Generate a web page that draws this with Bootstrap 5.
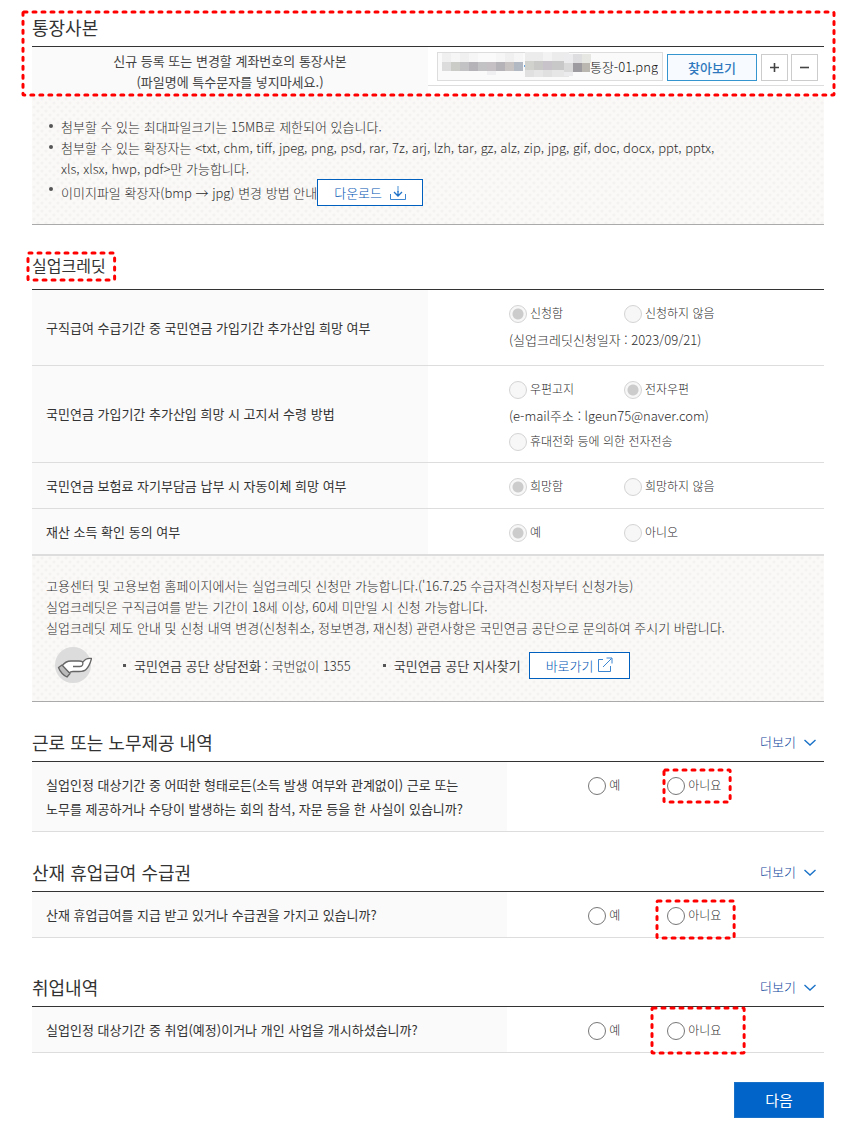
<!DOCTYPE html>
<html lang="ko">
<head>
<meta charset="utf-8">
<meta name="viewport" content="width=device-width, initial-scale=1">
<title>실업인정 신청</title>
<link href="https://cdn.jsdelivr.net/npm/bootstrap@5.3.0/dist/css/bootstrap.min.css" rel="stylesheet">
<script src="https://cdn.jsdelivr.net/npm/bootstrap@5.3.0/dist/js/bootstrap.bundle.min.js"></script>
<style>
body{font-family:"Noto Sans CJK KR",sans-serif;font-size:13px;line-height:21px;color:#2c2c2c;font-weight:300;background:#fff}
.page-wrap{padding:12px 26px 20px 32px}
.sec-head{margin:25px 0 4px}
.head-credit{margin-bottom:9px}
.head-job{margin-top:34px}
.sec-title{font-size:18px;line-height:30px;font-weight:400;color:#333;margin:0}
.title-sm{font-size:16px}

.form-grid{width:100%;table-layout:fixed;border-top:1px solid #333;border-collapse:separate;border-spacing:0}
.form-grid th{width:50%;background:#fafafa;color:#333;font-weight:400;padding:0 14px;line-height:24px}
.form-grid td{padding:11px 0 7px 81px;line-height:26px;vertical-align:top}
.form-grid th,.form-grid td{height:46px;border-bottom:1px solid #ddd}
.form-grid .tall th{height:76px}
.wide-label th{width:60%}
.form-grid .two-line th{height:70px}
.credit-grid{border-bottom:1px solid #ddd}
.form-grid.file-grid th{height:50px;line-height:21px;padding:3px 14px 5px;color:#444;text-align:center;border:0}
.form-grid.file-grid td{height:50px;padding:0;border:0}
.file-line{height:39px;padding:5px 6px 4px 9px;border-bottom:1px solid #ddd}

.info-box{background-color:#faf9f7;background-image:radial-gradient(circle at 2px 2px,#f4f2f1 1px,transparent 2px),radial-gradient(circle at 2px 2px,#f4f2f1 1px,transparent 2px);background-size:8px 8px;background-position:0 0,4px 4px;border-bottom:1px solid #aaa;padding:19px 14px 18px}
.info-list li{position:relative;padding:0 82px 0 15px}
.info-list li::before{content:"";position:absolute;left:3px;top:8px;width:4px;height:4px;border-radius:50%;background:#555}
.dot-item::before{content:"";width:3px;height:3px;background:#555;margin-right:8px;flex:none}
.contact-row{margin-top:9px;padding-left:9px}
.dot-item strong{font-weight:400;color:#444}
.phone-item{margin:0 32px 0 31px}

.btn-line{--bs-btn-color:#0055b4;--bs-btn-border-color:#0060bf;--bs-btn-bg:#fff;--bs-btn-border-radius:0;--bs-btn-font-size:13px;--bs-btn-font-weight:300;--bs-btn-line-height:25px;--bs-btn-padding-y:0;--bs-btn-padding-x:16px;--bs-btn-hover-bg:#eef5fc;--bs-btn-hover-color:#0060bf}
.btn-find{--bs-btn-color:#2f78bd;--bs-btn-border-color:#3596cf;--bs-btn-bg:#f7fbff;--bs-btn-border-radius:0;--bs-btn-font-size:13px;--bs-btn-font-weight:500;--bs-btn-line-height:25px;--bs-btn-padding-y:0;--bs-btn-padding-x:0;width:90px}
.btn-step{--bs-btn-border-color:#ccc;--bs-btn-bg:#fff;--bs-btn-border-radius:0;--bs-btn-padding-y:0;--bs-btn-padding-x:0;width:27px;height:27px}
.step-pair{gap:3px}
.btn-next{--bs-btn-color:#fff;--bs-btn-bg:#0064c8;--bs-btn-border-color:#1a72c8;--bs-btn-border-radius:0;--bs-btn-font-size:15px;--bs-btn-font-weight:400;--bs-btn-line-height:34px;--bs-btn-padding-y:0;--bs-btn-padding-x:0;width:90px;margin-top:29px}
.btn-more{--bs-btn-color:#0e469c;--bs-btn-border-width:0;--bs-btn-font-size:13px;--bs-btn-font-weight:300;--bs-btn-line-height:26px;--bs-btn-padding-y:0;--bs-btn-padding-x:8px}

.file-field{min-width:0}
.file-name{height:29px;border:1px solid #ddd;border-radius:0;background:#fafafa;color:#111;font-size:13px;font-weight:300;padding:0 4px;text-align:right}
.mosaic{position:absolute;left:5px;top:0}

.opt{display:inline-flex;align-items:center;gap:3px;position:relative;height:26px;font-size:12px;vertical-align:top}
.opt input{appearance:none;width:18px;height:18px;border:1px solid #777;border-radius:50%;margin:0;background:#fff;flex:none}
.opt label{line-height:24px;padding-bottom:2px}
.opt input:checked{background:radial-gradient(circle,#0064c8 5px,#fff 6px)}
.opt input:disabled{border-color:#d4d4d4;background:#f7f7f7}
.opt input:disabled:checked{background:radial-gradient(circle,#ccc 5px,#f7f7f7 6px)}
.opt-first{min-width:115px}
.wide-label .opt-first{min-width:79px}

.callout-frame{position:absolute;pointer-events:none}
.callout-frame svg{display:block;width:100%;height:100%;overflow:visible}
.callout-frame rect{width:100%;height:100%;fill:none;stroke:#f00;stroke-width:3;stroke-linecap:round;stroke-dasharray:3 6}
.around-file{inset:0 -10px 2px -9px}
.around-title{inset:3px -9px 0 -4px}
.around-work{inset:-3px -9px -3px -3px}
.around-injury{inset:-2px -13px -9px -10px}
.around-job{inset:-10px -23px -9px -15px}
</style>
</head>
<body>
<main class="page-wrap">

<section class="position-relative">
  <h2 class="sec-title mb-1">통장사본</h2>
  <table class="form-grid file-grid">
    <tr>
      <th scope="row"><label for="bankFile">신규 등록 또는 변경할 계좌번호의 통장사본<br>(파일명에 특수문자를 넣지마세요.)</label></th>
      <td>
        <div class="file-line d-flex align-items-end">
          <div class="file-field position-relative flex-grow-1 me-1">
            <input id="bankFile" class="file-name form-control" type="text" value="통장-01.png" readonly>
            <svg class="mosaic" width="151" height="27" viewBox="0 0 151 27" shape-rendering="crispEdges" aria-hidden="true">
              <path fill="#f0f0f0" d="M0 1h9v9H0zM18 1h9v9h-9zM63 1h9v9h-9z"/><path fill="#f6f6f6" d="M9 1h9v9H9zM27 1h9v9h-9zM54 1h9v9h-9zM72 1h9v9h-9z"/>
              <path fill="#dcdcdc" d="M0 10h9v9H0z"/><path fill="#cbcbc7" d="M9 10h9v9H9z"/><path fill="#c2c1c4" d="M18 10h9v9h-9zM36 10h9v9h-9z"/><path fill="#b5b3b7" d="M27 10h9v9h-9zM54 10h9v9h-9z"/><path fill="#c4c0c4" d="M45 10h9v9h-9z"/><path fill="#c6c3c2" d="M63 10h9v9h-9z"/><path fill="#b3b9c2" d="M72 10h9v9h-9z"/>
              <path fill="#f0eff1" d="M45 19h9v4h-9z"/><path fill="#68a6dd" d="M82 13h1v2h-1z"/>
              <path fill="#ececec" d="M83 0h44v9H83z"/><path fill="#f3f3f3" d="M101 0h9v9h-9z"/>
              <path fill="#d1d1cd" d="M83 9h9v9h-9z"/><path fill="#c9c9c7" d="M92 9h9v9h-9z"/><path fill="#c8c3ca" d="M101 9h9v9h-9z"/><path fill="#c8c8c8" d="M110 9h12v9h-12z"/>
              <path fill="#e0e0e0" d="M83 18h9v7h-9zM101 18h9v7h-9z"/><path fill="#e6e6e6" d="M92 18h9v7h-9zM110 18h17v7h-17z"/>
              <path fill="#ececee" d="M122 2h9v9h-9z"/><path fill="#dedee1" d="M131 2h9v9h-9z"/><path fill="#e6e6e2" d="M140 2h9v9h-9z"/>
              <path fill="#d9d9d9" d="M122 11h9v9h-9z"/><path fill="#9d9ba0" d="M131 11h9v9h-9z"/><path fill="#bab7b0" d="M140 11h8v9h-8z"/><path fill="#ebebed" d="M122 20h9v4h-9z"/>
            </svg>
          </div>
          <button type="button" class="btn btn-find me-1">찾아보기</button>
          <div class="step-pair d-flex">
            <button type="button" class="btn btn-step d-flex align-items-center justify-content-center" aria-label="추가"><svg width="9" height="9" viewBox="0 0 9 9"><path d="M4.5 0v9M0 4.500h9" stroke="#444" stroke-width="1.600"/></svg></button>
            <button type="button" class="btn btn-step d-flex align-items-center justify-content-center" aria-label="삭제"><svg width="9" height="9" viewBox="0 0 9 9"><path d="M0 4.500h9" stroke="#444" stroke-width="1.600"/></svg></button>
          </div>
        </div>
      </td>
    </tr>
  </table>
  <div class="callout-frame around-file"><svg aria-hidden="true"><rect rx="1"/></svg></div>
</section>

<div class="info-box">
  <ul class="info-list list-unstyled mb-0">
    <li>첨부할 수 있는 최대파일크기는 15MB로 제한되어 있습니다.</li>
    <li>첨부할 수 있는 확장자는 &lt;txt, chm, tiff, jpeg, png, psd, rar, 7z, arj, lzh, tar, gz, alz, zip, jpg, gif, doc, docx, ppt, pptx, xls, xlsx, hwp, pdf&gt;만 가능합니다.</li>
    <li class="d-flex align-items-center">이미지파일 확장자(bmp → jpg) 변경 방법 안내
      <button type="button" class="btn btn-line d-flex align-items-center gap-2">다운로드 <svg width="16" height="14" viewBox="0 0 16 14" fill="none"><path d="M.5 8v5.500h15V8" stroke="#3c85d0"/><path d="M8 0v6" stroke="#8fbbe6" stroke-width="1.600"/><path d="M8 5v5M4 6l4 4 4-4" stroke="#1f72c8" stroke-width="1.300"/></svg></button>
    </li>
  </ul>
</div>

<section>
  <div class="sec-head head-credit">
    <h2 class="sec-title title-sm d-inline-block position-relative align-top">실업크레딧<span class="callout-frame around-title"><svg aria-hidden="true"><rect rx="1"/></svg></span></h2>
  </div>
  <table class="form-grid credit-grid">
    <tr class="tall">
      <th scope="row">구직급여 수급기간 중 국민연금 가입기간 추가산입 희망 여부</th>
      <td>
        <div class="d-flex"><div class="opt opt-first"><input type="radio" name="credit" id="credit1" checked disabled><label for="credit1">신청함</label></div><div class="opt"><input type="radio" name="credit" id="credit2" disabled><label for="credit2">신청하지 않음</label></div></div>
        <div>(실업크레딧신청일자 : 2023/09/21)</div>
      </td>
    </tr>
    <tr>
      <th scope="row">국민연금 가입기간 추가산입 희망 시 고지서 수령 방법</th>
      <td>
        <div class="d-flex"><div class="opt opt-first"><input type="radio" name="notice" id="notice1" disabled><label for="notice1">우편고지</label></div><div class="opt"><input type="radio" name="notice" id="notice2" checked disabled><label for="notice2">전자우편</label></div></div>
        <div>(e-mail주소 : lgeun75@naver.com)</div>
        <div class="d-flex"><div class="opt"><input type="radio" name="notice" id="notice3" disabled><label for="notice3">휴대전화 등에 의한 전자전송</label></div></div>
      </td>
    </tr>
    <tr>
      <th scope="row">국민연금 보험료 자기부담금 납부 시 자동이체 희망 여부</th>
      <td><div class="d-flex"><div class="opt opt-first"><input type="radio" name="auto" id="auto1" checked disabled><label for="auto1">희망함</label></div><div class="opt"><input type="radio" name="auto" id="auto2" disabled><label for="auto2">희망하지 않음</label></div></div></td>
    </tr>
    <tr>
      <th scope="row">재산 소득 확인 동의 여부</th>
      <td><div class="d-flex"><div class="opt opt-first"><input type="radio" name="agree" id="agree1" checked disabled><label for="agree1">예</label></div><div class="opt"><input type="radio" name="agree" id="agree2" disabled><label for="agree2">아니오</label></div></div></td>
    </tr>
  </table>
  <div class="info-box">
    <p class="mb-0">고용센터 및 고용보험 홈페이지에서는 실업크레딧 신청만 가능합니다.('16.7.25 수급자격신청자부터 신청가능)<br>실업크레딧은 구직급여를 받는 기간이 18세 이상, 60세 미만일 시 신청 가능합니다.<br>실업크레딧 제도 안내 및 신청 내역 변경(신청취소, 정보변경, 재신청) 관련사항은 국민연금 공단으로 문의하여 주시기 바랍니다.</p>
    <div class="contact-row d-flex align-items-center">
      <svg width="37" height="36" viewBox="0 0 37 36" aria-hidden="true"><circle cx="18" cy="18" r="18" fill="#dcdcdc"/><path d="M7 19c2-3 5-5 9-5h8c2 0 3 .5 4 1 2-3 5-4 8.500-3.500-1 4-2.500 8-5.500 11-1.500 1.500-3.500 2-7 2h-6c-2 0-3 .5-4 1.500z" fill="#fff" stroke="#666" stroke-width="1.300" stroke-linejoin="round"/><path d="M18 19.500h7c2.500 0 3.500-2.500 2.500-4.500" fill="none" stroke="#666" stroke-width="1.300"/><path d="M3.500 20.500L7 18l8 8.500-3 3.500c-3-1-7-5-8.500-9.500z" fill="#bbb" stroke="#666" stroke-width="1.300" stroke-linejoin="round"/></svg>
      <div class="dot-item phone-item d-flex align-items-center"><span><strong>국민연금 공단 상담전화</strong> : 국번없이 1355</span></div>
      <div class="dot-item d-flex align-items-center"><strong>국민연금 공단 지사찾기</strong></div>
      <a href="#" class="btn btn-line d-flex align-items-center gap-1 ms-2">바로가기 <svg width="16" height="16" viewBox="0 0 16 16" fill="none"><path d="M6 2.500H1.500v12h12V9" stroke="#3c85d0"/><path d="M6 10l8.500-8.500M9.500 1h5.500v5.500" stroke="#3c85d0"/></svg></a>
    </div>
  </div>
</section>

<section>
  <div class="sec-head d-flex justify-content-between align-items-center">
    <h2 class="sec-title">근로 또는 노무제공 내역</h2>
    <button type="button" class="btn btn-more d-flex align-items-center gap-2">더보기 <svg width="12" height="7" viewBox="0 0 12 7" fill="none"><path d="M.5 1L6 6l5.500-5" stroke="#1a72c8" stroke-width="1.400"/></svg></button>
  </div>
  <table class="form-grid wide-label">
    <tr class="two-line">
      <th scope="row">실업인정 대상기간 중 어떠한 형태로든(소득 발생 여부와 관계없이) 근로 또는<br>노무를 제공하거나 수당이 발생하는 회의 참석, 자문 등을 한 사실이 있습니까?</th>
      <td><div class="d-flex"><div class="opt opt-first"><input type="radio" name="work" id="work1"><label for="work1">예</label></div><div class="opt"><input type="radio" name="work" id="work2"><label for="work2">아니요</label><span class="callout-frame around-work"><svg aria-hidden="true"><rect rx="1"/></svg></span></div></div></td>
    </tr>
  </table>
</section>

<section>
  <div class="sec-head d-flex justify-content-between align-items-center">
    <h2 class="sec-title">산재 휴업급여 수급권</h2>
    <button type="button" class="btn btn-more d-flex align-items-center gap-2">더보기 <svg width="12" height="7" viewBox="0 0 12 7" fill="none"><path d="M.5 1L6 6l5.500-5" stroke="#1a72c8" stroke-width="1.400"/></svg></button>
  </div>
  <table class="form-grid wide-label">
    <tr>
      <th scope="row">산재 휴업급여를 지급 받고 있거나 수급권을 가지고 있습니까?</th>
      <td><div class="d-flex"><div class="opt opt-first"><input type="radio" name="injury" id="injury1"><label for="injury1">예</label></div><div class="opt"><input type="radio" name="injury" id="injury2"><label for="injury2">아니요</label><span class="callout-frame around-injury"><svg aria-hidden="true"><rect rx="1"/></svg></span></div></div></td>
    </tr>
  </table>
</section>

<section>
  <div class="sec-head head-job d-flex justify-content-between align-items-center">
    <h2 class="sec-title">취업내역</h2>
    <button type="button" class="btn btn-more d-flex align-items-center gap-2">더보기 <svg width="12" height="7" viewBox="0 0 12 7" fill="none"><path d="M.5 1L6 6l5.500-5" stroke="#1a72c8" stroke-width="1.400"/></svg></button>
  </div>
  <table class="form-grid wide-label">
    <tr>
      <th scope="row">실업인정 대상기간 중 취업(예정)이거나 개인 사업을 개시하셨습니까?</th>
      <td><div class="d-flex"><div class="opt opt-first"><input type="radio" name="job" id="job1"><label for="job1">예</label></div><div class="opt"><input type="radio" name="job" id="job2"><label for="job2">아니요</label><span class="callout-frame around-job"><svg aria-hidden="true"><rect rx="1"/></svg></span></div></div></td>
    </tr>
  </table>
</section>

<div class="d-flex justify-content-end">
  <button type="submit" class="btn btn-next">다음</button>
</div>
</main>
</body>
</html>
